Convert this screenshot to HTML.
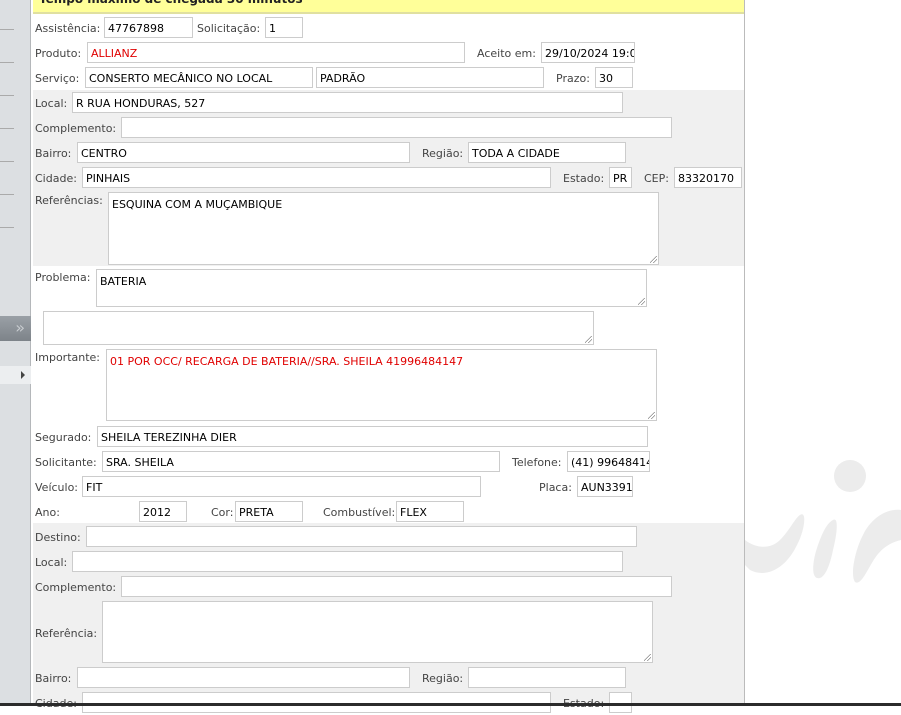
<!DOCTYPE html>
<html><head><meta charset="utf-8"><style>
*{margin:0;padding:0;box-sizing:border-box}
body{width:901px;height:706px;overflow:hidden;background:#fff;font-family:Tahoma,"DejaVu Sans","Liberation Sans",sans-serif;position:relative}
.a{position:absolute}
.sb{left:0;top:0;width:31px;height:706px;background:#dcdfe2;border-right:1px solid #b4b7ba}
.ln{left:0;width:14px;height:1px;background:#aaa}
.pan{left:32px;top:0;width:713px;height:706px;border-right:1px solid #bbb;background:#fff}
.band{left:33px;width:711px;background:#f0f0f0}
.l{position:absolute;font-size:11px;color:#444;white-space:nowrap;line-height:23px}
.i{position:absolute;height:21px;border:1px solid #ccc;background:#fff;font-size:11px;color:#000;line-height:19px;padding-left:3px;padding-top:1px;white-space:nowrap;overflow:hidden}
.t{position:absolute;border:1px solid #ccc;background:#fff;font-size:11px;color:#000;padding:5px 3px;white-space:nowrap;overflow:hidden}
.t:after{content:"";position:absolute;right:1px;bottom:1px;width:7px;height:7px;background:linear-gradient(135deg,transparent 45%,#888 45%,#888 52%,transparent 52%,transparent 70%,#888 70%,#888 77%,transparent 77%)}
.r{color:#e00000}
</style></head><body>
<div class="a sb"></div>
<div class="a ln" style="top:29px"></div>
<div class="a ln" style="top:62px"></div>
<div class="a ln" style="top:95px"></div>
<div class="a ln" style="top:128px"></div>
<div class="a ln" style="top:161px"></div>
<div class="a ln" style="top:194px"></div>
<div class="a ln" style="top:227px"></div>
<div class="a" style="left:0;top:316px;width:31px;height:25px;background:linear-gradient(#9aa0a6,#7d8389);color:#c8ccd0;font-size:16px;text-align:right;padding-right:6px;line-height:24px">»</div>
<div class="a" style="left:0;top:366px;width:31px;height:18px;background:#eceef0"></div>
<div class="a" style="left:21px;top:371px;width:0;height:0;border-left:4px solid #444;border-top:4px solid transparent;border-bottom:4px solid transparent"></div>

<div class="a pan"></div>
<svg class="a" style="left:745px;top:440px" width="156" height="266">
<circle cx="105" cy="36" r="16" fill="#ececec"/>
<path d="M55 75 C62 70 60 90 52 105 C40 130 20 138 5 130 L0 125 L0 100 C10 108 25 110 35 100 C45 90 50 78 55 75Z" fill="#ececec"/>
<path d="M88 80 C94 76 92 95 88 110 C84 130 78 140 72 138 C66 136 68 120 72 108 C77 93 82 83 88 80Z" fill="#ececec"/>
<path d="M156 70 C140 68 125 80 118 95 C110 110 105 135 110 142 C116 146 122 130 130 118 C138 106 148 102 156 100Z" fill="#ececec"/>
</svg>
<div class="a" style="left:33px;top:0;width:711px;height:14px;background:#ffff99;border-bottom:2px solid #e0e0a0;overflow:hidden"><div style="position:absolute;left:6px;top:-8px;font-size:12px;font-weight:bold;color:#222;white-space:nowrap">Tempo máximo de chegada 30 minutos</div></div>
<div class="a band" style="top:90px;height:176px"></div>
<div class="a band" style="top:523px;height:180px"></div>

<div class="l" style="left:35px;top:17px">Assistência:</div><div class="i" style="left:104px;top:17px;width:89px">47767898</div>
<div class="l" style="left:197px;top:17px">Solicitação:</div><div class="i" style="left:265px;top:17px;width:38px">1</div>

<div class="l" style="left:35px;top:42px">Produto:</div><div class="i r" style="left:87px;top:42px;width:378px">ALLIANZ</div>
<div class="l" style="left:477px;top:42px">Aceito em:</div><div class="i" style="left:541px;top:42px;width:94px">29/10/2024 19:05</div>

<div class="l" style="left:35px;top:67px">Serviço:</div><div class="i" style="left:85px;top:67px;width:228px">CONSERTO MECÂNICO NO LOCAL</div>
<div class="i" style="left:316px;top:67px;width:228px">PADRÃO</div>
<div class="l" style="left:556px;top:67px">Prazo:</div><div class="i" style="left:595px;top:67px;width:38px">30</div>

<div class="l" style="left:35px;top:92px">Local:</div><div class="i" style="left:72px;top:92px;width:551px">R RUA HONDURAS, 527</div>
<div class="l" style="left:35px;top:117px">Complemento:</div><div class="i" style="left:121px;top:117px;width:551px"></div>
<div class="l" style="left:35px;top:142px">Bairro:</div><div class="i" style="left:77px;top:142px;width:333px">CENTRO</div>
<div class="l" style="left:422px;top:142px">Região:</div><div class="i" style="left:468px;top:142px;width:158px">TODA A CIDADE</div>
<div class="l" style="left:35px;top:167px">Cidade:</div><div class="i" style="left:82px;top:167px;width:469px">PINHAIS</div>
<div class="l" style="left:563px;top:167px">Estado:</div><div class="i" style="left:609px;top:167px;width:23px">PR</div>
<div class="l" style="left:644px;top:167px">CEP:</div><div class="i" style="left:674px;top:167px;width:68px">83320170</div>
<div class="l" style="left:35px;top:189px">Referências:</div><div class="t" style="left:108px;top:192px;width:551px;height:73px">ESQUINA COM A MUÇAMBIQUE</div>

<div class="l" style="left:35px;top:266px">Problema:</div><div class="t" style="left:96px;top:269px;width:551px;height:38px">BATERIA</div>
<div class="t" style="left:43px;top:311px;width:551px;height:34px"></div>
<div class="l" style="left:35px;top:346px">Importante:</div><div class="t r" style="left:106px;top:349px;width:551px;height:72px">01 POR OCC/ RECARGA DE BATERIA//SRA. SHEILA 41996484147</div>

<div class="l" style="left:35px;top:426px">Segurado:</div><div class="i" style="left:97px;top:426px;width:551px">SHEILA TEREZINHA DIER</div>
<div class="l" style="left:35px;top:451px">Solicitante:</div><div class="i" style="left:102px;top:451px;width:398px">SRA. SHEILA</div>
<div class="l" style="left:512px;top:451px">Telefone:</div><div class="i" style="left:567px;top:451px;width:83px">(41) 996484147</div>
<div class="l" style="left:35px;top:476px">Veículo:</div><div class="i" style="left:82px;top:476px;width:399px">FIT</div>
<div class="l" style="left:539px;top:476px">Placa:</div><div class="i" style="left:577px;top:476px;width:56px">AUN3391</div>
<div class="l" style="left:35px;top:501px">Ano:</div><div class="i" style="left:139px;top:501px;width:48px">2012</div>
<div class="l" style="left:211px;top:501px">Cor:</div><div class="i" style="left:235px;top:501px;width:68px">PRETA</div>
<div class="l" style="left:323px;top:501px">Combustível:</div><div class="i" style="left:396px;top:501px;width:68px">FLEX</div>

<div class="l" style="left:35px;top:526px">Destino:</div><div class="i" style="left:86px;top:526px;width:551px"></div>
<div class="l" style="left:35px;top:551px">Local:</div><div class="i" style="left:72px;top:551px;width:551px"></div>
<div class="l" style="left:35px;top:576px">Complemento:</div><div class="i" style="left:121px;top:576px;width:551px"></div>
<div class="l" style="left:35px;top:622px">Referência:</div><div class="t" style="left:102px;top:601px;width:551px;height:62px"></div>
<div class="l" style="left:35px;top:667px">Bairro:</div><div class="i" style="left:77px;top:667px;width:333px"></div>
<div class="l" style="left:422px;top:667px">Região:</div><div class="i" style="left:468px;top:667px;width:158px"></div>
<div class="l" style="left:35px;top:692px">Cidade:</div><div class="i" style="left:82px;top:692px;width:469px"></div>
<div class="l" style="left:563px;top:692px">Estado:</div><div class="i" style="left:609px;top:692px;width:23px"></div>
<div class="a" style="left:0;top:703px;width:901px;height:3px;background:#2b2b2b;z-index:10"></div>
</body></html>
